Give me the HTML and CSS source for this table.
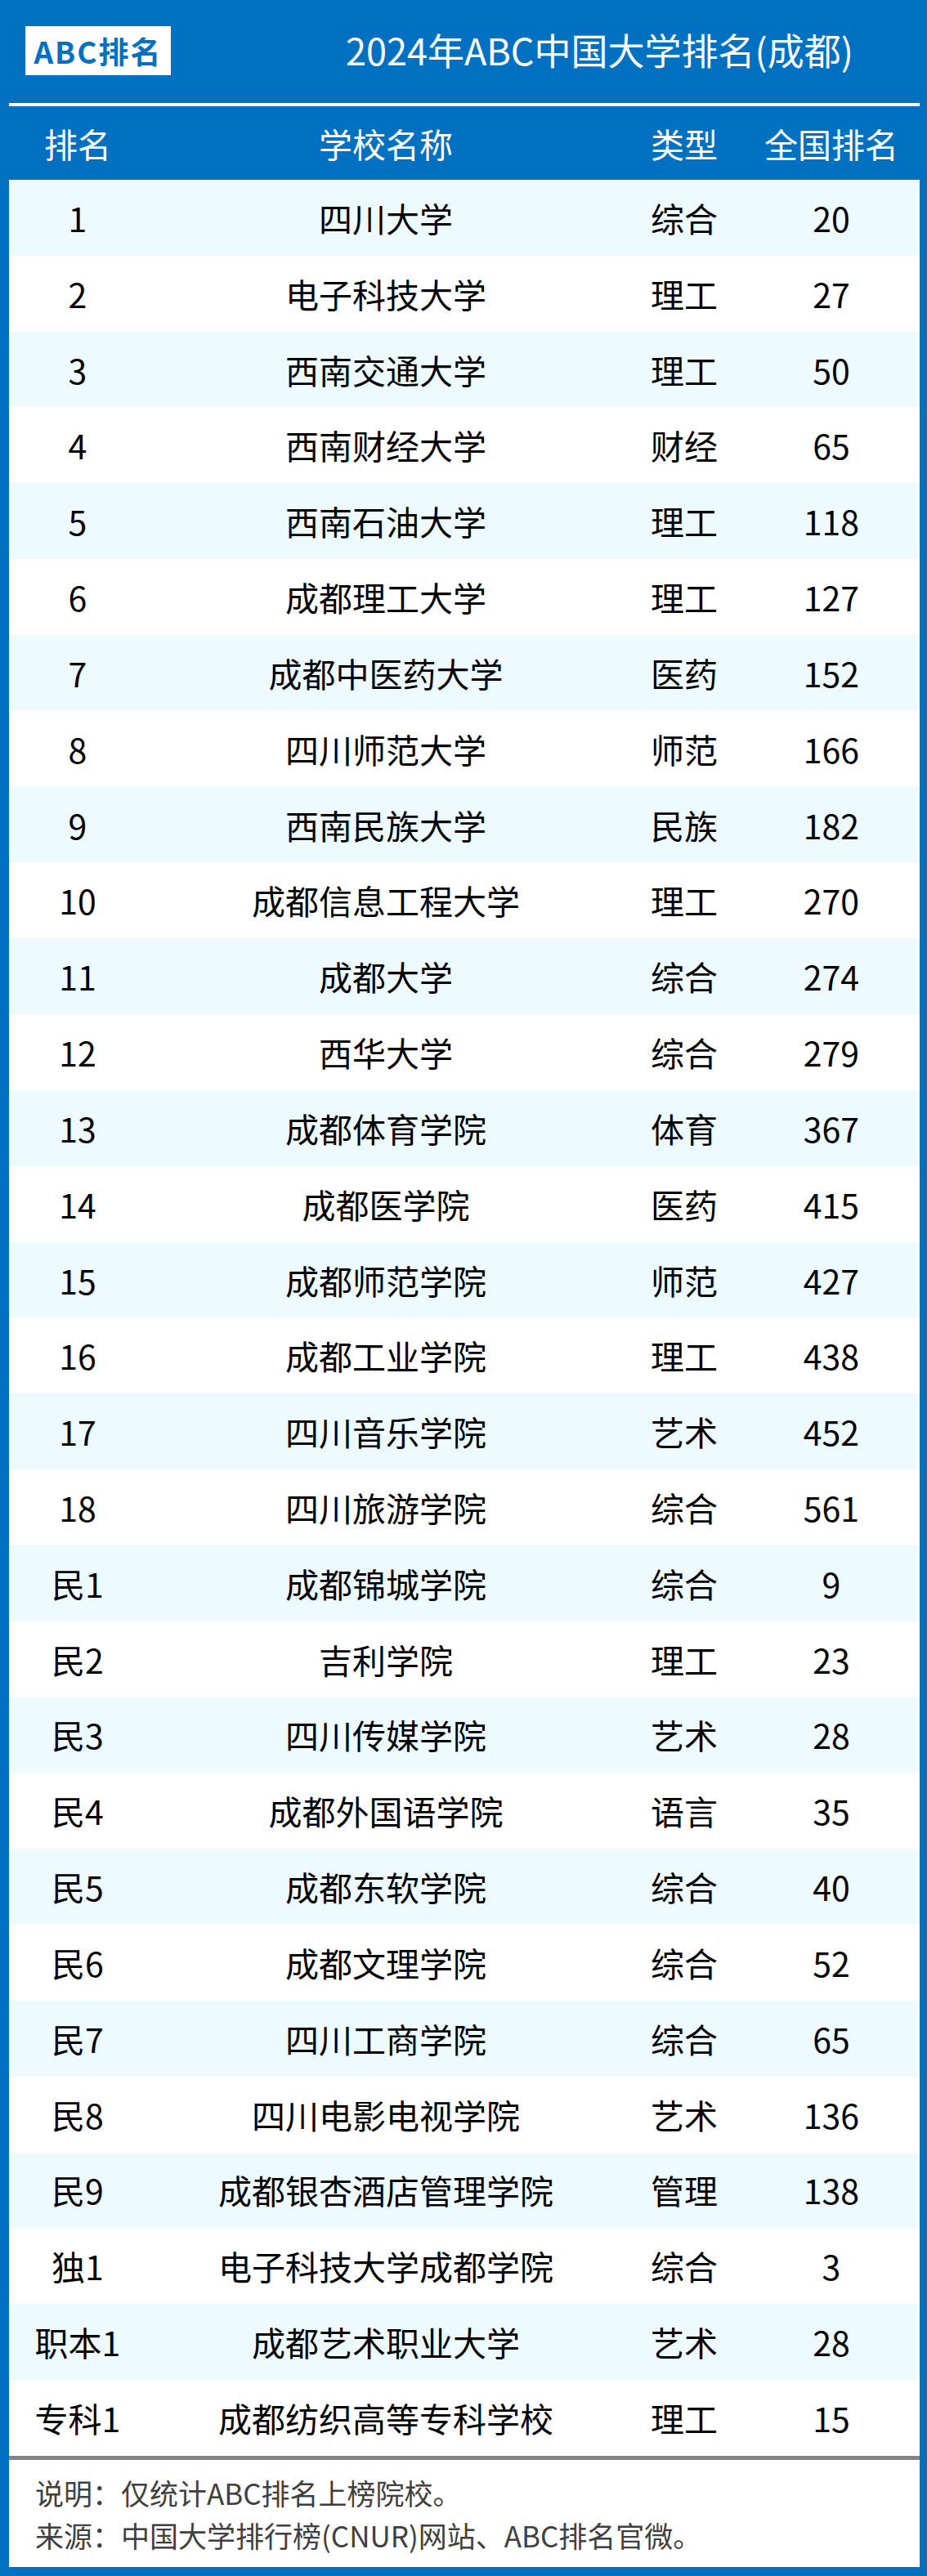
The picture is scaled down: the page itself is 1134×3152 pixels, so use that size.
FILE: index.html
```html
<!DOCTYPE html>
<html lang="zh-CN">
<head>
<meta charset="utf-8">
<title>2024年ABC中国大学排名(成都)</title>
<link rel="stylesheet" href="styles.css">
</head>
<body>
<div class="page">
  <header class="top">
    <div class="logo">ABC排名</div>
    <h1 class="title">2024年ABC中国大学排名(成都)</h1>
  </header>
  <div class="rule"></div>
  <div class="thead">
    <div>排名</div><div>学校名称</div><div>类型</div><div>全国排名</div>
  </div>
  <div class="tbody">
    <div class="row"><div>1</div><div>四川大学</div><div>综合</div><div>20</div></div>
    <div class="row"><div>2</div><div>电子科技大学</div><div>理工</div><div>27</div></div>
    <div class="row"><div>3</div><div>西南交通大学</div><div>理工</div><div>50</div></div>
    <div class="row"><div>4</div><div>西南财经大学</div><div>财经</div><div>65</div></div>
    <div class="row"><div>5</div><div>西南石油大学</div><div>理工</div><div>118</div></div>
    <div class="row"><div>6</div><div>成都理工大学</div><div>理工</div><div>127</div></div>
    <div class="row"><div>7</div><div>成都中医药大学</div><div>医药</div><div>152</div></div>
    <div class="row"><div>8</div><div>四川师范大学</div><div>师范</div><div>166</div></div>
    <div class="row"><div>9</div><div>西南民族大学</div><div>民族</div><div>182</div></div>
    <div class="row"><div>10</div><div>成都信息工程大学</div><div>理工</div><div>270</div></div>
    <div class="row"><div>11</div><div>成都大学</div><div>综合</div><div>274</div></div>
    <div class="row"><div>12</div><div>西华大学</div><div>综合</div><div>279</div></div>
    <div class="row"><div>13</div><div>成都体育学院</div><div>体育</div><div>367</div></div>
    <div class="row"><div>14</div><div>成都医学院</div><div>医药</div><div>415</div></div>
    <div class="row"><div>15</div><div>成都师范学院</div><div>师范</div><div>427</div></div>
    <div class="row"><div>16</div><div>成都工业学院</div><div>理工</div><div>438</div></div>
    <div class="row"><div>17</div><div>四川音乐学院</div><div>艺术</div><div>452</div></div>
    <div class="row"><div>18</div><div>四川旅游学院</div><div>综合</div><div>561</div></div>
    <div class="row"><div>民1</div><div>成都锦城学院</div><div>综合</div><div>9</div></div>
    <div class="row"><div>民2</div><div>吉利学院</div><div>理工</div><div>23</div></div>
    <div class="row"><div>民3</div><div>四川传媒学院</div><div>艺术</div><div>28</div></div>
    <div class="row"><div>民4</div><div>成都外国语学院</div><div>语言</div><div>35</div></div>
    <div class="row"><div>民5</div><div>成都东软学院</div><div>综合</div><div>40</div></div>
    <div class="row"><div>民6</div><div>成都文理学院</div><div>综合</div><div>52</div></div>
    <div class="row"><div>民7</div><div>四川工商学院</div><div>综合</div><div>65</div></div>
    <div class="row"><div>民8</div><div>四川电影电视学院</div><div>艺术</div><div>136</div></div>
    <div class="row"><div>民9</div><div>成都银杏酒店管理学院</div><div>管理</div><div>138</div></div>
    <div class="row"><div>独1</div><div>电子科技大学成都学院</div><div>综合</div><div>3</div></div>
    <div class="row"><div>职本1</div><div>成都艺术职业大学</div><div>艺术</div><div>28</div></div>
    <div class="row"><div>专科1</div><div>成都纺织高等专科学校</div><div>理工</div><div>15</div></div>
  </div>
  <footer class="notes">
    <p>说明：仅统计ABC排名上榜院校。</p>
    <p>来源：中国大学排行榜(CNUR)网站、ABC排名官微。</p>
  </footer>
</div>
</body>
</html>
```

FILE: styles.css
```css
* { box-sizing: border-box; }
html, body { margin: 0; padding: 0; }
body {
  font-family: "Noto Sans CJK SC", "Noto Sans", sans-serif;
  background: #0070c0;
}
.page {
  width: 1134px;
  background: #0070c0;
  padding: 0 9px 10px 11px;
}
.top {
  height: 126px;
  display: flex;
  align-items: center;
  padding-left: 20px;
}
.logo {
  width: 178px;
  height: 60px;
  background: #ffffff;
  color: #0070c0;
  font-weight: 700;
  font-size: 37px;
  letter-spacing: 2px;
  line-height: 60px;
  text-align: center;
  margin-top: -2px;
}
.title {
  margin: -4px 0 0 214px;
  color: #ffffff;
  font-weight: 400;
  font-size: 45px;
  line-height: 60px;
}
.rule {
  height: 4px;
  background: #ffffff;
}
.thead, .row {
  display: grid;
  grid-template-columns: 168px 586px 144px 1fr;
  align-items: center;
  text-align: center;
}
.thead {
  height: 90px;
  color: #ffffff;
  font-size: 41px;
}
.row {
  height: 92.83px;
  font-size: 41px;
  color: #000000;
  background: #ffffff;
}
.row:nth-child(odd) { background: #edfaff; }
.thead > div, .row > div { white-space: nowrap; line-height: 1; }
.notes {
  background: #ffffff;
  border-top: 5px solid #858585;
  padding: 14px 0 13px 32px;
  color: #404040;
  font-size: 35px;
  line-height: 52px;
}
.notes p { margin: 0; }
```
